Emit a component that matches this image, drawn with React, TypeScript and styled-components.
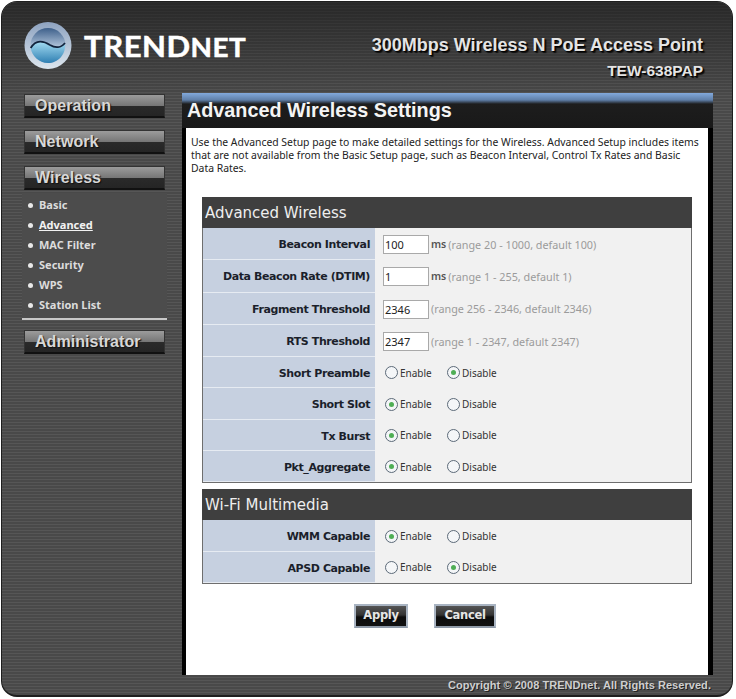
import styled, { createGlobalStyle } from "styled-components";

const Global = createGlobalStyle`
  html, body {
    margin: 0;
    background: #fff;
  }
`;

const stripes = "repeating-linear-gradient(180deg, #565656 0 1px, #494949 1px 3px)";

const Frame = styled.div`
  width: 732px;
  height: 696px;
  margin: 1px 0 0 1px;
  box-sizing: border-box;
  border: 1px solid #1e1e1e;
  border-bottom-width: 2px;
  border-radius: 16px;
  overflow: hidden;
  display: flex;
  flex-direction: column;
  background: ${stripes};
`;

const Header = styled.header`
  height: 91px;
  flex: none;
  box-sizing: border-box;
  padding: 20px 29px 0 22px;
  display: flex;
  justify-content: space-between;
  background: linear-gradient(180deg, rgba(20, 20, 20, 0.62), rgba(30, 30, 30, 0.05)), ${stripes};
`;

const Logo = styled.div`
  display: flex;
  align-items: center;
  gap: 12px;
  height: 47px;
`;

const LogoText = styled.span`
  font: bold 29px/1 "Lato", "Liberation Sans", sans-serif;
  color: #fff;
  letter-spacing: 0.5px;
  transform: scaleX(1.07);
  transform-origin: left center;
  -webkit-text-stroke: 0.5px #fff;
`;

const LogoSmall = styled.span`
  font-size: 26px;
`;

const Product = styled.div`
  text-align: right;
  color: #e4e4e4;
  font-family: "Liberation Sans", Arial, sans-serif;
  font-weight: bold;
  text-shadow: 1px 1px 1px #000, 2px 2px 1px #111;
`;

const ProductName = styled.div`
  font-size: 18px;
  line-height: 22px;
  margin-top: 12px;
`;

const ProductModel = styled.div`
  font-size: 15.5px;
  line-height: 18px;
  margin-top: 6px;
`;

const Body = styled.div`
  flex: 1;
  display: flex;
  min-height: 0;
`;

const Sidebar = styled.nav`
  width: 180px;
  flex: none;
  box-sizing: border-box;
  padding: 1px 0 0 22px;
  display: flex;
  flex-direction: column;
`;

const MenuButton = styled.div<{ $after: number }>`
  height: 24px;
  width: 141px;
  flex: none;
  box-sizing: border-box;
  margin-bottom: ${(p) => p.$after}px;
  padding-left: 10px;
  border: 1px solid #333;
  border-bottom: 2px solid #111;
  background: linear-gradient(180deg, #9c9c9c 0%, #777 50%, #2a2a2a 54%, #252525 100%);
  font: bold 16px/21px "Liberation Sans", Arial, sans-serif;
  letter-spacing: 0.05px;
  color: #d8d8d8;
  text-shadow: 1px 1px 1px #111;
`;

const SubMenu = styled.ul`
  list-style: none;
  width: 145px;
  height: 127px;
  flex: none;
  box-sizing: border-box;
  margin: 0 0 10px -2px;
  padding: 2px 0 0 6px;
  background: #4c4c4c;
  border-bottom: 2px solid #c8c8c8;
`;

const SubItem = styled.li<{ $active?: boolean }>`
  display: flex;
  align-items: center;
  gap: 6px;
  height: 20px;
  font: bold 11px/20px "Noto Sans", "DejaVu Sans", sans-serif;
  color: ${(p) => (p.$active ? "#f2f2f2" : "#dcdcdc")};
  text-decoration: ${(p) => (p.$active ? "underline" : "none")};

  &::before {
    content: "";
    width: 5px;
    height: 5px;
    border-radius: 50%;
    background: #e8e8e8;
  }
`;

const Main = styled.main`
  width: 531px;
  flex: none;
  display: flex;
  flex-direction: column;
`;

const TitleBar = styled.div`
  height: 35px;
  flex: none;
  box-sizing: border-box;
  background: linear-gradient(180deg, #82a9dc 0, #5f7fa8 7px, #1d1d1d 11px, #191919 100%);
  display: flex;
  align-items: flex-end;
  padding: 0 0 5px 5px;
  font: bold 19.8px/25px "Liberation Sans", Arial, sans-serif;
  color: #f4f4f4;
`;

const Content = styled.div`
  flex: 1;
  background: #fff;
  margin: 0 5px 0 4px;
  box-shadow: -4px 0 0 #000, 5px 0 0 #000;
  padding: 8px 0 0 5px;
  display: flex;
  flex-direction: column;
  font-family: "Noto Sans", "Open Sans", sans-serif;
`;

const Intro = styled.p`
  margin: 0 0 22px;
  font-size: 10.4px;
  line-height: 13px;
  color: #222;
  width: 515px;
`;

const Section = styled.section`
  margin-left: 11px;
  width: 490px;
  margin-bottom: 6px;
  border: solid #6e6e6e;
  border-width: 0 1px 1px 1px;
  box-sizing: border-box;
`;

const SectionTitle = styled.h2`
  margin: 0 -1px;
  height: 31px;
  padding-left: 3px;
  background: #3f3f3f;
  color: #eee;
  font: normal 15px/33px "DejaVu Sans", Verdana, sans-serif;
`;

const Row = styled.div<{ $tall?: boolean }>`
  display: flex;
  height: ${(p) => (p.$tall ? 32.3 : 31.3)}px;
`;

const Label = styled.div`
  width: 172px;
  flex: none;
  box-sizing: border-box;
  text-align: right;
  padding-right: 5px;
  background: #c6d0e0;
  border-bottom: 1px solid #e6ebf2;
  font: bold 11px/33px "DejaVu Sans", Verdana, sans-serif;
  letter-spacing: -0.4px;
  color: #1b1f2b;
`;

const Value = styled.div`
  flex: 1;
  display: flex;
  align-items: center;
  padding-left: 8px;
  background: #f1f1f1;
  color: #333;
`;

const TextInput = styled.input`
  width: 46px;
  height: 19px;
  box-sizing: border-box;
  margin: 1px 2px 0 0;
  padding: 0 1px;
  border: 1px solid #a9a9a9;
  background: #fff;
  font: 11px "Noto Sans", sans-serif;
  color: #222;
  outline: none;
`;

const Unit = styled.span`
  font-size: 10.5px;
  font-weight: 600;
  color: #555;
  margin-right: 2px;
`;

const Hint = styled.span`
  font-size: 10.8px;
  color: #9b9b9b;
`;

const RadioLabel = styled.label`
  display: flex;
  align-items: center;
  width: 62px;
  gap: 2px;
  margin-left: 2px;
  margin-right: -2px;
  font-size: 10px;
  color: #333;
`;

const Radio = styled.input`
  appearance: none;
  width: 13px;
  height: 13px;
  margin: 0;
  border: 1px solid #5c6a78;
  border-radius: 50%;
  background: #f4f6f8;
  display: grid;
  place-items: center;

  &:checked::before {
    content: "";
    width: 5px;
    height: 5px;
    border-radius: 50%;
    background: #4fae55;
  }
`;

const Actions = styled.div`
  display: flex;
  gap: 26px;
  margin: 14px 0 0 163px;
`;

const ActionButton = styled.button<{ $width: number }>`
  width: ${(p) => p.$width}px;
  height: 24px;
  padding: 0;
  border: 2px solid #a9b4c2;
  border-bottom-color: #8f9aa8;
  background: linear-gradient(180deg, #555 0%, #333 45%, #0d0d0d 55%, #111 100%);
  color: #e6e6e6;
  font: bold 11.5px/1 "DejaVu Sans", Verdana, sans-serif;
  letter-spacing: -0.3px;
`;

const Footer = styled.footer`
  height: 20px;
  flex: none;
  text-align: right;
  padding-right: 21px;
  font: bold 11px/20px "Liberation Sans", Arial, sans-serif;
  letter-spacing: 0.05px;
  color: #cfcfcf;
  text-shadow: 1px 1px 0 #222;
`;

function TrendnetMark() {
  return (
    <svg width="48" height="47" viewBox="0 0 48 47">
      <defs>
        <linearGradient id="ring" x1="0" y1="0" x2="0" y2="1">
          <stop offset="0" stopColor="#8ea3c0" />
          <stop offset="1" stopColor="#dde6ee" />
        </linearGradient>
        <linearGradient id="sky" x1="0" y1="0" x2="0" y2="1">
          <stop offset="0" stopColor="#3d5f8a" />
          <stop offset="0.55" stopColor="#b3c6dc" />
        </linearGradient>
        <linearGradient id="sea" x1="0" y1="0" x2="0" y2="1">
          <stop offset="0" stopColor="#a4dcf2" />
          <stop offset="1" stopColor="#2f7fb2" />
        </linearGradient>
      </defs>
      <circle cx="24" cy="23.5" r="23.5" fill="url(#ring)" />
      <circle cx="24" cy="23.5" r="17.5" fill="url(#sky)" />
      <path d="M6.7 26 C12 17 20 19 26 23 C31 26 37 26 41 21 C42 33 34 41 24 41 C15 41 8 34 6.7 26 Z" fill="url(#sea)" />
      <path d="M6.7 26 C12 17 20 19 26 23 C31 26 37 26 41 21" fill="none" stroke="#12233c" strokeWidth="1.8" />
    </svg>
  );
}

type Setting =
  | { label: string; kind: "text"; value: string; unit?: string; hint: string }
  | { label: string; kind: "radio"; enabled: boolean };

const wireless: Setting[] = [
  { label: "Beacon Interval", kind: "text", value: "100", unit: "ms", hint: "(range 20 - 1000, default 100)" },
  { label: "Data Beacon Rate (DTIM)", kind: "text", value: "1", unit: "ms", hint: "(range 1 - 255, default 1)" },
  { label: "Fragment Threshold", kind: "text", value: "2346", hint: "(range 256 - 2346, default 2346)" },
  { label: "RTS Threshold", kind: "text", value: "2347", hint: "(range 1 - 2347, default 2347)" },
  { label: "Short Preamble", kind: "radio", enabled: false },
  { label: "Short Slot", kind: "radio", enabled: true },
  { label: "Tx Burst", kind: "radio", enabled: true },
  { label: "Pkt_Aggregate", kind: "radio", enabled: true },
];

const multimedia: Setting[] = [
  { label: "WMM Capable", kind: "radio", enabled: true },
  { label: "APSD Capable", kind: "radio", enabled: false },
];

function SettingRow({ item }: { item: Setting }) {
  return (
    <Row $tall={item.kind === "text"}>
      <Label>{item.label}</Label>
      {item.kind === "text" ? (
        <Value>
          <TextInput defaultValue={item.value} />
          {item.unit && <Unit>{item.unit}</Unit>}
          <Hint>{item.hint}</Hint>
        </Value>
      ) : (
        <Value>
          <RadioLabel>
            <Radio type="radio" name={item.label} defaultChecked={item.enabled} />
            Enable
          </RadioLabel>
          <RadioLabel>
            <Radio type="radio" name={item.label} defaultChecked={!item.enabled} />
            Disable
          </RadioLabel>
        </Value>
      )}
    </Row>
  );
}

export default function App() {
  return (
    <>
      <Global />
      <Frame>
        <Header>
          <Logo>
            <TrendnetMark />
            <LogoText>
              TREND<LogoSmall>NET</LogoSmall>
            </LogoText>
          </Logo>
          <Product>
            <ProductName>300Mbps Wireless N PoE Access Point</ProductName>
            <ProductModel>TEW-638PAP</ProductModel>
          </Product>
        </Header>
        <Body>
          <Sidebar>
            <MenuButton $after={12}>Operation</MenuButton>
            <MenuButton $after={12}>Network</MenuButton>
            <MenuButton $after={3}>Wireless</MenuButton>
            <SubMenu>
              <SubItem>Basic</SubItem>
              <SubItem $active>Advanced</SubItem>
              <SubItem>MAC Filter</SubItem>
              <SubItem>Security</SubItem>
              <SubItem>WPS</SubItem>
              <SubItem>Station List</SubItem>
            </SubMenu>
            <MenuButton $after={0}>Administrator</MenuButton>
          </Sidebar>
          <Main>
            <TitleBar>Advanced Wireless Settings</TitleBar>
            <Content>
              <Intro>
                Use the Advanced Setup page to make detailed settings for the Wireless. Advanced Setup includes items
                that are not available from the Basic Setup page, such as Beacon Interval, Control Tx Rates and Basic
                Data Rates.
              </Intro>
              <Section>
                <SectionTitle>Advanced Wireless</SectionTitle>
                {wireless.map((item) => (
                  <SettingRow key={item.label} item={item} />
                ))}
              </Section>
              <Section>
                <SectionTitle>Wi-Fi Multimedia</SectionTitle>
                {multimedia.map((item) => (
                  <SettingRow key={item.label} item={item} />
                ))}
              </Section>
              <Actions>
                <ActionButton $width={54}>Apply</ActionButton>
                <ActionButton $width={62}>Cancel</ActionButton>
              </Actions>
            </Content>
          </Main>
        </Body>
        <Footer>Copyright © 2008 TRENDnet. All Rights Reserved.</Footer>
      </Frame>
    </>
  );
}
